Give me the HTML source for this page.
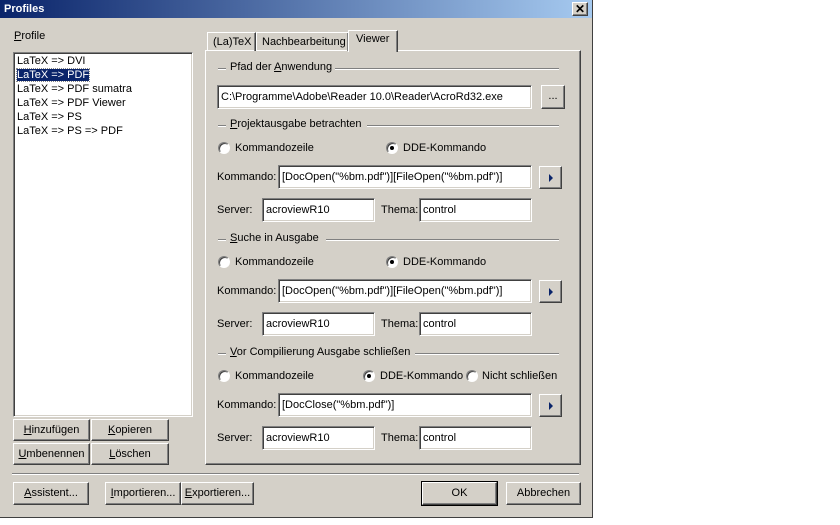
<!DOCTYPE html>
<html><head><meta charset="utf-8"><style>
*{box-sizing:border-box;margin:0;padding:0}
body{width:840px;height:525px;background:#fff;position:relative;overflow:hidden;font:11px "Liberation Sans",sans-serif;color:#000}
#dlg{position:absolute;left:0;top:0;width:593px;height:518px;background:#d4d0c8;border-right:1px solid #404040;border-bottom:1px solid #404040}
#title{position:absolute;left:0;top:0;width:592px;height:18px;background:linear-gradient(to right,#0a246a,#a6caf0);color:#fff;font-weight:bold;font-size:11px;line-height:18px;padding-left:4px}
.a{position:absolute;white-space:nowrap}
.sunk{position:absolute;background:#fff;border:1px solid;border-color:#808080 #fff #fff #808080;box-shadow:inset 1px 1px 0 #404040,inset -1px -1px 0 #d4d0c8}
.btn{position:absolute;background:#d4d0c8;border:1px solid;border-color:#fff #404040 #404040 #fff;box-shadow:inset -1px -1px 0 #808080;text-align:center;line-height:20px}
.txt{position:absolute;left:3px;top:5px;white-space:nowrap}
.radio{position:absolute;width:12px;height:12px;border-radius:50%;background:#fff;border:1px solid;border-color:#808080 #fff #fff #808080;box-shadow:inset 1px 1px 0 #404040}
.radio.on::after{content:"";position:absolute;left:3px;top:3px;width:4px;height:4px;border-radius:50%;background:#000}
.grp{position:absolute;height:1px;border-top:1px solid #808080;border-bottom:1px solid #fff}
u{text-decoration:underline}
.arr{width:0;height:0;border-left:4px solid #0a246a;border-top:4px solid transparent;border-bottom:4px solid transparent;position:absolute;left:9px;top:7px}
</style></head><body>
<div id="dlg">
<div id="title">Profiles</div>
<div class="btn" style="left:572px;top:2px;width:16px;height:14px;line-height:12px;font-weight:bold;font-size:12px">✕</div>

<div class="a" style="left:14px;top:30px"><u>P</u>rofile</div>
<div class="sunk" style="left:13px;top:52px;width:180px;height:365px"></div>
<div class="a" style="left:17px;top:54px;line-height:14px">LaTeX =&gt; DVI<br><span style="background:#0a246a;color:#fff;outline:1px dotted #888">LaTeX =&gt; PDF</span><br>LaTeX =&gt; PDF sumatra<br>LaTeX =&gt; PDF Viewer<br>LaTeX =&gt; PS<br>LaTeX =&gt; PS =&gt; PDF</div>

<div class="btn" style="left:13px;top:419px;width:77px;height:22px"><u>H</u>inzufügen</div>
<div class="btn" style="left:91px;top:419px;width:78px;height:22px"><u>K</u>opieren</div>
<div class="btn" style="left:13px;top:443px;width:77px;height:22px"><u>U</u>mbenennen</div>
<div class="btn" style="left:91px;top:443px;width:78px;height:22px"><u>L</u>öschen</div>

<div style="position:absolute;left:205px;top:50px;width:376px;height:415px;border:1px solid;border-color:#fff #404040 #404040 #fff;box-shadow:inset -1px -1px 0 #808080"></div>
<div style="position:absolute;left:207px;top:32px;width:49px;height:19px;border:1px solid;border-bottom:none;border-color:#fff #404040 #fff #fff;box-shadow:inset -1px 0 0 #808080;padding:3px 0 0 5px">(La)TeX</div>
<div style="position:absolute;left:256px;top:32px;width:93px;height:19px;border:1px solid;border-bottom:none;border-color:#fff #404040 #fff #fff;box-shadow:inset -1px 0 0 #808080;padding:3px 0 0 5px">Nachbearbeitung</div>
<div style="position:absolute;left:348px;top:30px;width:50px;height:22px;background:#d4d0c8;border:1px solid;border-bottom:none;border-color:#fff #404040 #fff #fff;box-shadow:inset -1px 0 0 #808080;padding:2px 0 0 7px">Viewer</div>

<div class="grp" style="left:218px;top:68px;width:8px"></div>
<div class="a" style="left:230px;top:61px">Pfad der <u>A</u>nwendung</div>
<div class="grp" style="left:335px;top:68px;width:224px"></div>
<div class="sunk" style="left:217px;top:85px;width:315px;height:24px"><span class="txt">C:\Programme\Adobe\Reader 10.0\Reader\AcroRd32.exe</span></div>
<div class="btn" style="left:541px;top:85px;width:24px;height:24px;line-height:20px">...</div>

<div class="grp" style="left:218px;top:125px;width:8px"></div>
<div class="a" style="left:230px;top:118px"><u>P</u>rojektausgabe betrachten</div>
<div class="grp" style="left:367px;top:125px;width:192px"></div>
<div class="radio" style="left:218px;top:142px"></div><div class="a" style="left:235px;top:142px">Kommandozeile</div>
<div class="radio on" style="left:386px;top:142px"></div><div class="a" style="left:403px;top:142px">DDE-Kommando</div>
<div class="a" style="left:217px;top:171px">Kommando:</div>
<div class="sunk" style="left:278px;top:165px;width:254px;height:24px"><span class="txt">[DocOpen("%bm.pdf")][FileOpen("%bm.pdf")]</span></div>
<div class="btn" style="left:539px;top:166px;width:23px;height:23px"><div class="arr"></div></div>
<div class="a" style="left:217px;top:204px">Server:</div>
<div class="sunk" style="left:262px;top:198px;width:113px;height:24px"><span class="txt">acroviewR10</span></div>
<div class="a" style="left:381px;top:204px">Thema:</div>
<div class="sunk" style="left:419px;top:198px;width:113px;height:24px"><span class="txt">control</span></div>

<div class="grp" style="left:218px;top:239px;width:8px"></div>
<div class="a" style="left:230px;top:232px"><u>S</u>uche in Ausgabe</div>
<div class="grp" style="left:326px;top:239px;width:233px"></div>
<div class="radio" style="left:218px;top:256px"></div><div class="a" style="left:235px;top:256px">Kommandozeile</div>
<div class="radio on" style="left:386px;top:256px"></div><div class="a" style="left:403px;top:256px">DDE-Kommando</div>
<div class="a" style="left:217px;top:285px">Kommando:</div>
<div class="sunk" style="left:278px;top:279px;width:254px;height:24px"><span class="txt">[DocOpen("%bm.pdf")][FileOpen("%bm.pdf")]</span></div>
<div class="btn" style="left:539px;top:280px;width:23px;height:23px"><div class="arr"></div></div>
<div class="a" style="left:217px;top:318px">Server:</div>
<div class="sunk" style="left:262px;top:312px;width:113px;height:24px"><span class="txt">acroviewR10</span></div>
<div class="a" style="left:381px;top:318px">Thema:</div>
<div class="sunk" style="left:419px;top:312px;width:113px;height:24px"><span class="txt">control</span></div>

<div class="grp" style="left:218px;top:353px;width:8px"></div>
<div class="a" style="left:230px;top:346px"><u>V</u>or Compilierung Ausgabe schließen</div>
<div class="grp" style="left:415px;top:353px;width:144px"></div>
<div class="radio" style="left:218px;top:370px"></div><div class="a" style="left:235px;top:370px">Kommandozeile</div>
<div class="radio on" style="left:363px;top:370px"></div><div class="a" style="left:380px;top:370px">DDE-Kommando</div>
<div class="radio" style="left:466px;top:370px"></div><div class="a" style="left:482px;top:370px">Nicht schließen</div>
<div class="a" style="left:217px;top:399px">Kommando:</div>
<div class="sunk" style="left:278px;top:393px;width:254px;height:24px"><span class="txt">[DocClose("%bm.pdf")]</span></div>
<div class="btn" style="left:539px;top:394px;width:23px;height:23px"><div class="arr"></div></div>
<div class="a" style="left:217px;top:432px">Server:</div>
<div class="sunk" style="left:262px;top:426px;width:113px;height:24px"><span class="txt">acroviewR10</span></div>
<div class="a" style="left:381px;top:432px">Thema:</div>
<div class="sunk" style="left:419px;top:426px;width:113px;height:24px"><span class="txt">control</span></div>

<div class="grp" style="left:12px;top:473px;width:567px"></div>

<div class="btn" style="left:13px;top:482px;width:76px;height:23px"><u>A</u>ssistent...</div>
<div class="btn" style="left:105px;top:482px;width:76px;height:23px"><u>I</u>mportieren...</div>
<div class="btn" style="left:181px;top:482px;width:73px;height:23px"><u>E</u>xportieren...</div>
<div class="btn" style="left:422px;top:482px;width:75px;height:23px;outline:1px solid #000">OK</div>
<div class="btn" style="left:506px;top:482px;width:75px;height:23px">Abbrechen</div>
</div>
</body></html>
